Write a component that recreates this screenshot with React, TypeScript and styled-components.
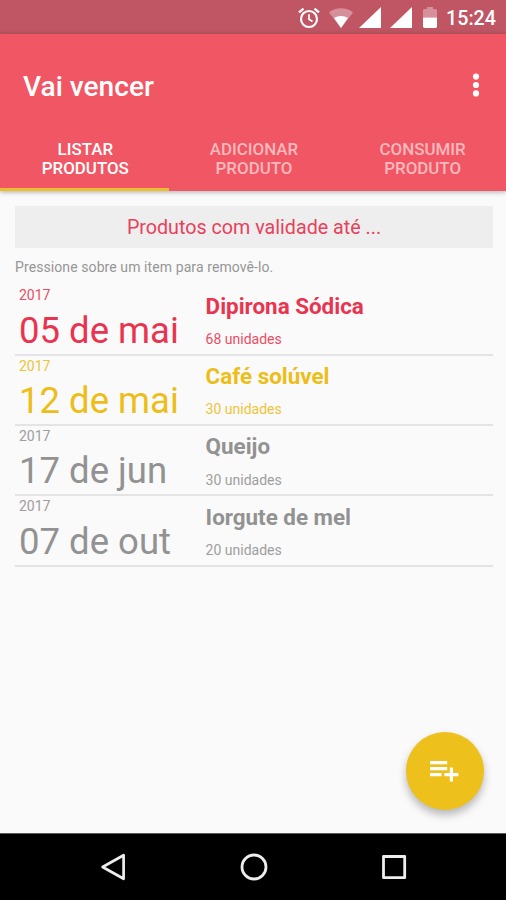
import React from "react";
import styled, { createGlobalStyle } from "styled-components";

const GlobalStyle = createGlobalStyle`
  *, *::before, *::after { box-sizing: border-box; }
  html, body { margin: 0; background: #fafafa; }
  body { font-family: Roboto, sans-serif; overflow: hidden; }
  svg { display: block; flex: none; }
`;

const Screen = styled.div`
  position: relative;
  display: flex;
  flex-direction: column;
  width: 506px;
  height: 900px;
  background: #fafafa;
`;

const StatusBar = styled.div`
  display: flex;
  flex: none;
  align-items: center;
  justify-content: flex-end;
  height: 33.7px;
  padding: 2px 10px 0 0;
  background: #c05564;
  color: #fff;
`;

const StatusIcon = styled.svg<{ $gap: number }>`
  margin-right: ${(p) => p.$gap}px;
`;

const Clock = styled.span`
  padding-top: 3px;
  font-size: 19.7px;
  font-weight: 500;
  line-height: 24px;
`;

const Header = styled.header`
  flex: none;
  height: 157.6px;
  background: #f15664;
  color: #fff;
  box-shadow: 0 1px 5px rgba(0, 0, 0, 0.32);
`;

const TitleBar = styled.div`
  display: flex;
  align-items: center;
  justify-content: space-between;
  height: 103px;
  padding: 0 26px 0 23px;
`;

const Title = styled.h1`
  margin: 0 0 -4px;
  font-size: 28.1px;
  font-weight: 500;
  line-height: 34px;
`;

const Tabs = styled.nav`
  display: grid;
  grid-template-columns: repeat(3, 1fr);
  height: 54.6px;
`;

const Tab = styled.button<{ $active: boolean }>`
  padding: 3px 35px 0 37px;
  border: 0;
  border-bottom: 3px solid ${(p) => (p.$active ? "#ecbe2f" : "transparent")};
  background: none;
  color: ${(p) => (p.$active ? "#fff" : "#fbb9bd")};
  font: 500 16.9px/19px Roboto, sans-serif;
  text-transform: uppercase;
  display: flex;
  justify-content: center;
`;

const Content = styled.main`
  flex: 1;
  padding: 14.7px 13px 0 15px;
`;

const FilterButton = styled.button`
  display: block;
  width: 100%;
  height: 42.3px;
  padding: 2px 0 0;
  border: 0;
  background: #eeeeee;
  color: #e8415b;
  font: 400 19.7px/24px Roboto, sans-serif;
`;

const Hint = styled.p`
  margin: 10.6px 0 0;
  color: #969696;
  font-size: 14px;
  line-height: 17px;
  letter-spacing: 0.09px;
`;

const List = styled.ul`
  margin: 9.6px 0 0;
  padding: 0;
  list-style: none;
`;

type Tone = "expired" | "soon" | "normal";
const tones: Record<Tone, string> = {
  expired: "#e93450",
  soon: "#edbd18",
  normal: "#929292",
};

const Row = styled.li<{ $tone: Tone }>`
  display: grid;
  grid-template-columns: 186.6px 1fr;
  height: 70.3px;
  padding-left: 4px;
  border-bottom: 2px solid #e4e4e4;
  color: ${(p) => tones[p.$tone]};
`;

const Year = styled.div`
  padding-top: 2px;
  font-size: 14px;
  line-height: 17px;
  opacity: 0.88;
`;

const Day = styled.div`
  font-size: 36.5px;
  line-height: 43px;
  margin-top: 4.4px;
  white-space: nowrap;
`;

const Name = styled.div`
  padding-top: 7.3px;
  font-size: 22.4px;
  font-weight: 700;
  line-height: 26px;
`;

const Amount = styled.div`
  margin-top: 12.4px;
  font-size: 14px;
  line-height: 17px;
  opacity: 0.88;
`;

const Fab = styled.button`
  position: absolute;
  left: 405.7px;
  top: 731.6px;
  display: flex;
  align-items: center;
  justify-content: center;
  width: 78.6px;
  height: 78.6px;
  padding: 1px 1px 0 0;
  border: 0;
  border-radius: 50%;
  background: #edc01b;
  box-shadow: 0 5px 9px rgba(0, 0, 0, 0.27);
`;

const NavBar = styled.footer`
  display: flex;
  flex: none;
  align-items: center;
  justify-content: center;
  gap: 112.4px;
  height: 67px;
  padding-left: 1.2px;
  border-top: 1px solid #5a5a5a;
  background: #000;
`;

interface Product {
  year: string;
  day: string;
  name: string;
  amount: number;
  tone: Tone;
}

const products: Product[] = [
  { year: "2017", day: "05 de mai", name: "Dipirona Sódica", amount: 68, tone: "expired" },
  { year: "2017", day: "12 de mai", name: "Café solúvel", amount: 30, tone: "soon" },
  { year: "2017", day: "17 de jun", name: "Queijo", amount: 30, tone: "normal" },
  { year: "2017", day: "07 de out", name: "Iorgute de mel", amount: 20, tone: "normal" },
];

const tabs = [
  ["Listar", "Produtos"],
  ["Adicionar", "Produto"],
  ["Consumir", "Produto"],
];

const Signal = ({ gap }: { gap: number }) => (
  <StatusIcon $gap={gap} width="22" height="21" viewBox="0 0 22 21">
    <path d="M0 21 22 0V21Z" fill="#fff" />
  </StatusIcon>
);

export default function App() {
  return (
    <Screen>
      <GlobalStyle />
      <StatusBar>
        <StatusIcon $gap={8.5} width="22" height="22" viewBox="0 0 22 22" fill="none" stroke="#fff">
          <circle cx="11" cy="12" r="8" strokeWidth="2.2" />
          <path d="M11 7.2V12.3L14.5 14.6" strokeWidth="1.8" />
          <path d="M1 5.4 5.5 1.6M21 5.4 16.5 1.6" strokeWidth="2.4" />
        </StatusIcon>
        <StatusIcon $gap={6} width="24" height="20" viewBox="0 0 24 20">
          <path d="M0 4.4C7-1.1 17-1.1 24 4.4L12 20Z" fill="#fff" opacity="0.35" />
          <path d="M5 10C9 7.2 15 7.2 19 10L12 20Z" fill="#fff" />
        </StatusIcon>
        <Signal gap={9} />
        <Signal gap={11} />
        <StatusIcon $gap={9.3} width="14" height="21" viewBox="0 0 14 21">
          <path d="M0 10.5V3.4Q0 2 1.4 2H4V0H10V2H12.6Q14 2 14 3.4V10.5Z" fill="#fff" opacity="0.35" />
          <path d="M0 10.5H14V19.6Q14 21 12.6 21H1.4Q0 21 0 19.6Z" fill="#fff" />
        </StatusIcon>
        <Clock>15:24</Clock>
      </StatusBar>
      <Header>
        <TitleBar>
          <Title>Vai vencer</Title>
          <svg width="8" height="24" viewBox="0 0 8 24" fill="#fff">
            <circle cx="4" cy="3.6" r="3.1" />
            <circle cx="4" cy="12" r="3.1" />
            <circle cx="4" cy="20.4" r="3.1" />
          </svg>
        </TitleBar>
        <Tabs>
          {tabs.map(([first, second], i) => (
            <Tab key={first} $active={i === 0}>
              <span>
                {first}
                <br />
                {second}
              </span>
            </Tab>
          ))}
        </Tabs>
      </Header>
      <Content>
        <FilterButton>Produtos com validade até ...</FilterButton>
        <Hint>Pressione sobre um item para removê-lo.</Hint>
        <List>
          {products.map((p) => (
            <Row key={p.name} $tone={p.tone}>
              <div>
                <Year>{p.year}</Year>
                <Day>{p.day}</Day>
              </div>
              <div>
                <Name>{p.name}</Name>
                <Amount>{p.amount} unidades</Amount>
              </div>
            </Row>
          ))}
        </List>
      </Content>
      <Fab aria-label="Adicionar à lista">
        <svg width="30" height="22" viewBox="0 0 30 22" fill="#fff">
          <path d="M1 1H18.2V4.3H1ZM1 7H18.2V10.3H1ZM1 13H12.5V16.3H1Z" />
          <path d="M20.8 7.6H24V13H29.4V16.2H24V21.6H20.8V16.2H15.4V13H20.8Z" />
        </svg>
      </Fab>
      <NavBar>
        <svg width="28" height="28" viewBox="0 0 28 28" fill="none" stroke="#eee" strokeWidth="2.7" strokeLinejoin="round">
          <path d="M24.6 2.2V25.8L3.6 14Z" />
        </svg>
        <svg width="28" height="28" viewBox="0 0 28 28" fill="none" stroke="#eee" strokeWidth="2.8">
          <circle cx="14" cy="14" r="12" />
        </svg>
        <svg width="28" height="28" viewBox="0 0 28 28" fill="none" stroke="#eee" strokeWidth="2.8" strokeLinejoin="round">
          <rect x="3.5" y="3.5" width="21.2" height="21.2" />
        </svg>
      </NavBar>
    </Screen>
  );
}
